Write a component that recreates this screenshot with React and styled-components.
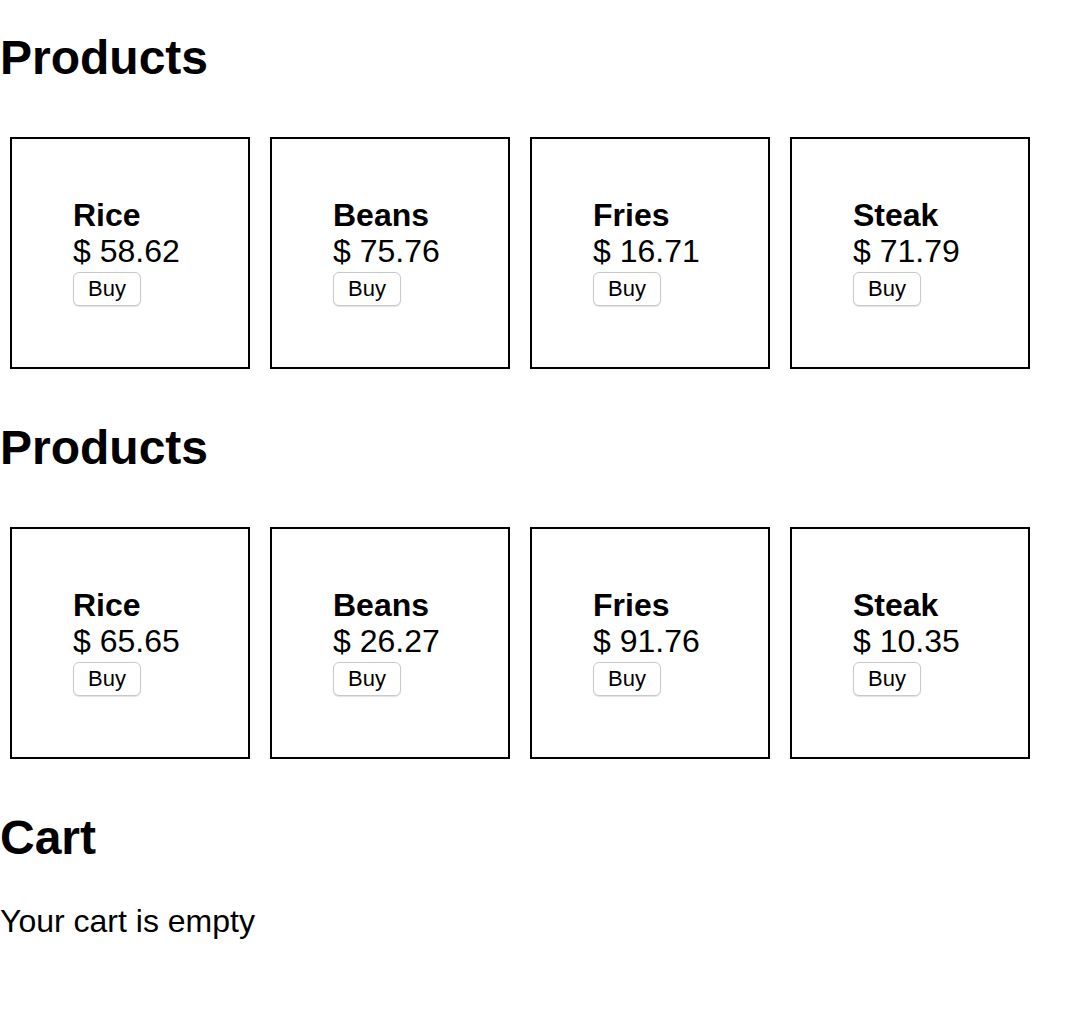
import { createGlobalStyle } from "styled-components";
import styled from "styled-components";

const GlobalStyle = createGlobalStyle`
  body {
    margin: 0;
    background: #fff;
    color: #000;
    font-family: "Liberation Sans", Arial, sans-serif;
  }
`;

const Section = styled.section`
  padding-bottom: 21px;
`;

const Heading = styled.h1`
  margin: 30px 0 ${(p) => (p.$tight ? "0" : "51px")};
  font-size: 48px;
  line-height: 56px;
  font-weight: bold;
`;

const ProductList = styled.div`
  display: flex;
  gap: 20px;
  padding-left: 10px;
`;

const Card = styled.div`
  box-sizing: border-box;
  width: 240px;
  height: 232px;
  border: 2px solid #000;
  padding: 58px 0 0 61px;
`;

const Name = styled.div`
  font-size: 32px;
  line-height: 36px;
  font-weight: bold;
`;

const Price = styled.div`
  font-size: 32px;
  line-height: 36px;
`;

const BuyButton = styled.button`
  margin-top: 3px;
  height: 34px;
  padding: 0 14px;
  background: #fff;
  border: 1px solid #c9c9c9;
  border-radius: 6px;
  box-shadow: 0 1px 1px rgba(0, 0, 0, 0.12);
  font-family: "Liberation Sans", Arial, sans-serif;
  font-size: 22px;
  color: #000;
  cursor: pointer;
`;

const EmptyText = styled.p`
  margin: 37px 0 0;
  font-size: 32px;
  line-height: 36px;
`;

const shelves = [
  [
    { name: "Rice", price: "58.62" },
    { name: "Beans", price: "75.76" },
    { name: "Fries", price: "16.71" },
    { name: "Steak", price: "71.79" },
  ],
  [
    { name: "Rice", price: "65.65" },
    { name: "Beans", price: "26.27" },
    { name: "Fries", price: "91.76" },
    { name: "Steak", price: "10.35" },
  ],
];

function Product({ product }) {
  return (
    <Card>
      <Name>{product.name}</Name>
      <Price>$ {product.price}</Price>
      <BuyButton>Buy</BuyButton>
    </Card>
  );
}

export default function App() {
  return (
    <>
      <GlobalStyle />
      {shelves.map((products, i) => (
        <Section key={i}>
          <Heading>Products</Heading>
          <ProductList>
            {products.map((p) => (
              <Product key={p.name} product={p} />
            ))}
          </ProductList>
        </Section>
      ))}
      <section>
        <Heading $tight>Cart</Heading>
        <EmptyText>Your cart is empty</EmptyText>
      </section>
    </>
  );
}
